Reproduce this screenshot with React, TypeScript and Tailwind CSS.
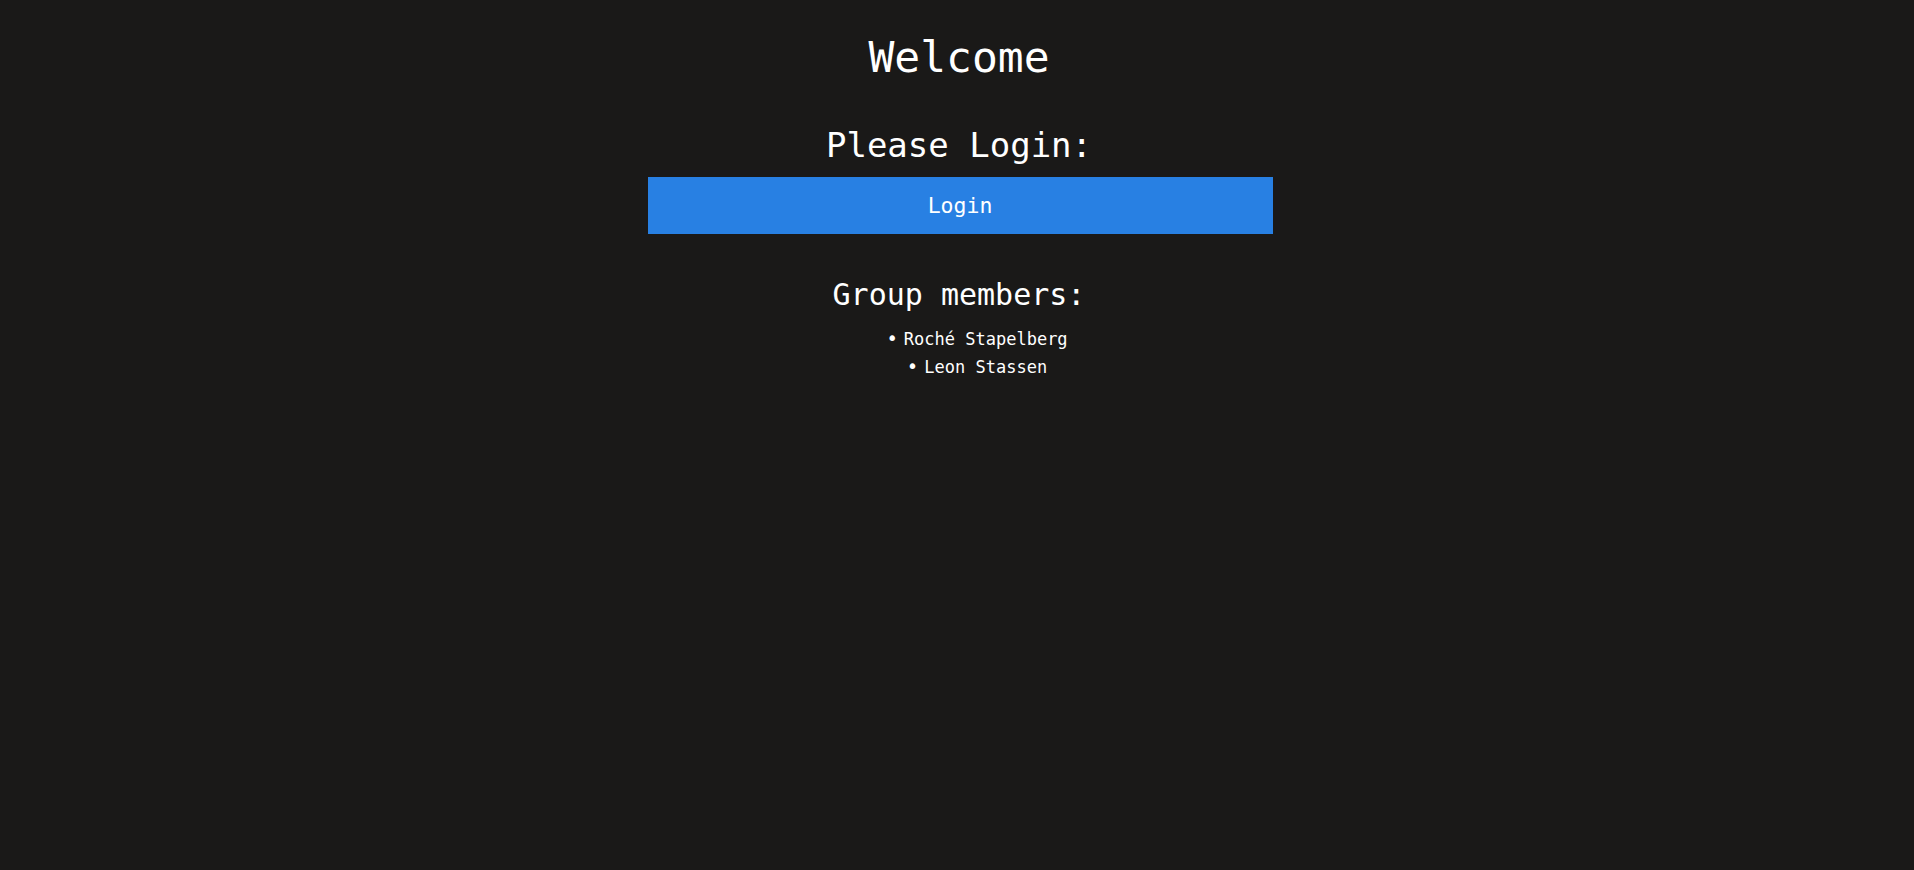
export default function App() {
  return (
    <div
      className="min-h-[870px] w-full bg-[#1a1918] text-white pl-[4px] flex flex-col items-center"
      style={{ fontFamily: '"DejaVu Sans Mono", "Liberation Mono", monospace' }}
    >
      <h1 className="mt-[33px] text-[43px] leading-[48px] font-normal text-center">Welcome</h1>
      <h2 className="mt-[44px] text-[34px] leading-[40px] font-normal text-center">Please Login:</h2>
      <button className="mt-[12px] ml-[2px] w-[625px] h-[57px] bg-[#2880e3] text-white text-[21.5px] leading-[57px] text-center">
        Login
      </button>
      <h3 className="mt-[43px] text-[30px] leading-[36px] font-normal text-center">Group members:</h3>
      <ul className="mt-[12px] list-none text-center pl-[36px] text-[17px] leading-[28px] w-full">
        <li>
          <span className="mr-[6px] text-[19px] leading-none">•</span>Roché Stapelberg
        </li>
        <li>
          <span className="mr-[6px] text-[19px] leading-none">•</span>Leon Stassen
        </li>
      </ul>
    </div>
  );
}
